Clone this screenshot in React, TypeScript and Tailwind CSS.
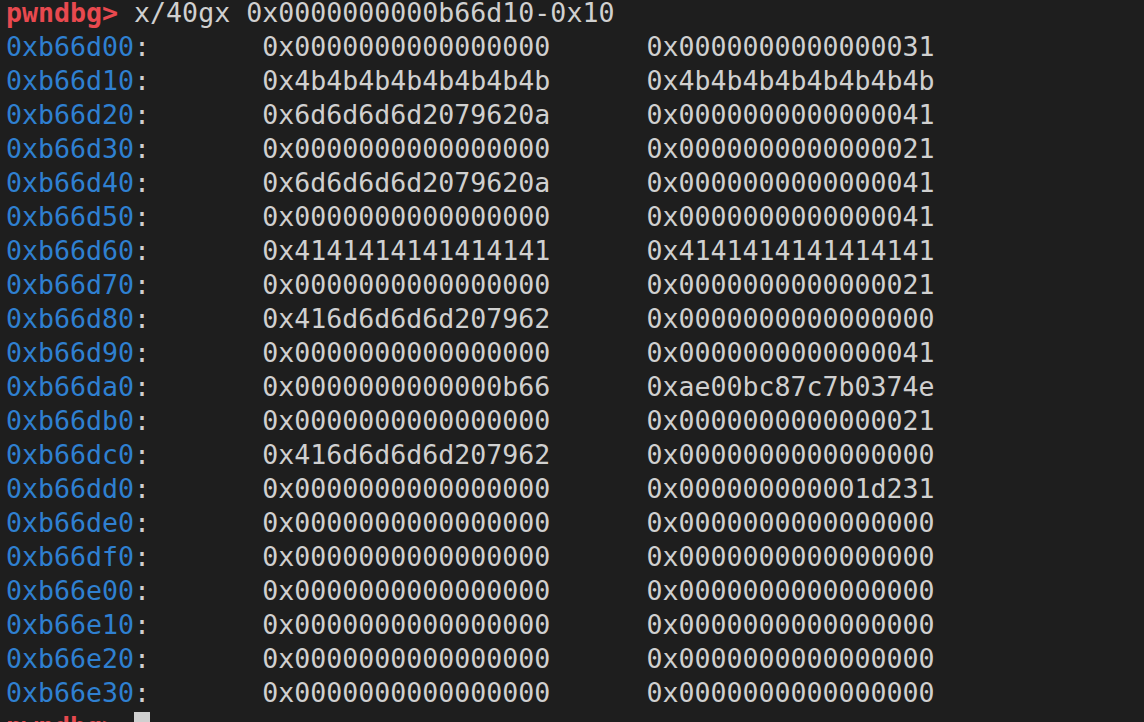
import React from "react";

const Z = "0x0000000000000000";
const rows: [string, string, string][] = [
  ["0xb66d00", Z, "0x0000000000000031"],
  ["0xb66d10", "0x4b4b4b4b4b4b4b4b", "0x4b4b4b4b4b4b4b4b"],
  ["0xb66d20", "0x6d6d6d6d2079620a", "0x0000000000000041"],
  ["0xb66d30", Z, "0x0000000000000021"],
  ["0xb66d40", "0x6d6d6d6d2079620a", "0x0000000000000041"],
  ["0xb66d50", Z, "0x0000000000000041"],
  ["0xb66d60", "0x4141414141414141", "0x4141414141414141"],
  ["0xb66d70", Z, "0x0000000000000021"],
  ["0xb66d80", "0x416d6d6d6d207962", Z],
  ["0xb66d90", Z, "0x0000000000000041"],
  ["0xb66da0", "0x0000000000000b66", "0xae00bc87c7b0374e"],
  ["0xb66db0", Z, "0x0000000000000021"],
  ["0xb66dc0", "0x416d6d6d6d207962", Z],
  ["0xb66dd0", Z, "0x000000000001d231"],
  ["0xb66de0", Z, Z],
  ["0xb66df0", Z, Z],
  ["0xb66e00", Z, Z],
  ["0xb66e10", Z, Z],
  ["0xb66e20", Z, Z],
  ["0xb66e30", Z, Z],
];

export default function App() {
  return (
    <div
      className="h-[722px] w-[1144px] overflow-hidden bg-[#1e1e1e] text-[#d0d0d0]"
      style={{ fontFamily: '"DejaVu Sans Mono", monospace' }}
    >
      <div className="-mt-[4px] pl-[6px] text-[26.6px] leading-[34px] whitespace-pre">
        <div>
          <span className="font-bold text-[#e8494f]">pwndbg&gt;</span>
          <span> x/40gx 0x0000000000b66d10-0x10</span>
        </div>
        {rows.map(([a, b, c]) => (
          <div key={a}>
            <span className="text-[#2f80d1]">{a}</span>
            <span>{":       " + b + "      " + c}</span>
          </div>
        ))}
        <div className="flex items-center">
          <span className="font-bold text-[#e8494f]">pwndbg&gt; </span>
          <span className="inline-block h-[30px] w-[16px] bg-[#d0d0d0]" />
        </div>
      </div>
    </div>
  );
}
